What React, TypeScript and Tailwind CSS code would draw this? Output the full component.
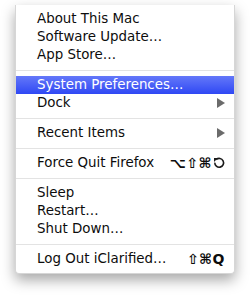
const font = { fontFamily: '"DejaVu Sans", sans-serif' };

type Item = { label: string; shortcut?: string; esc?: boolean; submenu?: boolean; active?: boolean };

const groups: Item[][] = [
  [{ label: "About This Mac" }, { label: "Software Update…" }, { label: "App Store…" }],
  [{ label: "System Preferences…", active: true }, { label: "Dock", submenu: true }],
  [{ label: "Recent Items", submenu: true }],
  [{ label: "Force Quit Firefox", shortcut: "⌥⇧⌘", esc: true }],
  [{ label: "Sleep" }, { label: "Restart…" }, { label: "Shut Down…" }],
  [{ label: "Log Out iClarified…", shortcut: "⇧⌘Q" }],
];

function Arrow() {
  return (
    <svg width="8" height="10" viewBox="0 0 8 10" className="shrink-0">
      <path d="M0 0 L8 5 L0 10 Z" fill="#6b6b6b" />
    </svg>
  );
}

function Esc() {
  return (
    <svg width="12" height="12" viewBox="0 0 12 12" className="ml-[1px] shrink-0">
      <path d="M3.2 2.6 A4.4 4.4 0 1 1 1.8 5.6" fill="none" stroke="#1a1a1a" strokeWidth="1.6" />
      <path d="M1 1 L5 1 L1 5 Z" fill="#1a1a1a" />
    </svg>
  );
}

function Row({ item }: { item: Item }) {
  return (
    <div
      className={
        "flex h-[18px] items-center pl-[21px] pr-[9px] text-[13.4px] leading-none " +
        (item.active
          ? "bg-[linear-gradient(#6478f9,#2f48f4)] text-white"
          : "text-[#0d0d0d]")
      }
    >
      <span className="flex-1 whitespace-nowrap">{item.label}</span>
      {item.submenu && <Arrow />}
      {item.shortcut && (
        <span className="flex items-center whitespace-nowrap text-[14px] font-bold tracking-[0.5px]">
          {item.shortcut}
          {item.esc && <Esc />}
        </span>
      )}
    </div>
  );
}

export default function App() {
  return (
    <div className="h-[300px] w-[252px] bg-white pt-[5px] pl-[15px]" style={font}>
      <div className="w-[220px] rounded-b-[4px] border-x border-b border-[#d6d6d6] bg-white py-[5px] shadow-[0_6px_14px_rgba(0,0,0,0.35)]">
        {groups.map((g, gi) => (
          <div key={gi}>
            {gi > 0 && (
              <div className="flex h-[12px] items-center">
                <div className="h-px w-full bg-[#e3e3e3]" />
              </div>
            )}
            {g.map((it) => (
              <Row key={it.label} item={it} />
            ))}
          </div>
        ))}
      </div>
    </div>
  );
}
